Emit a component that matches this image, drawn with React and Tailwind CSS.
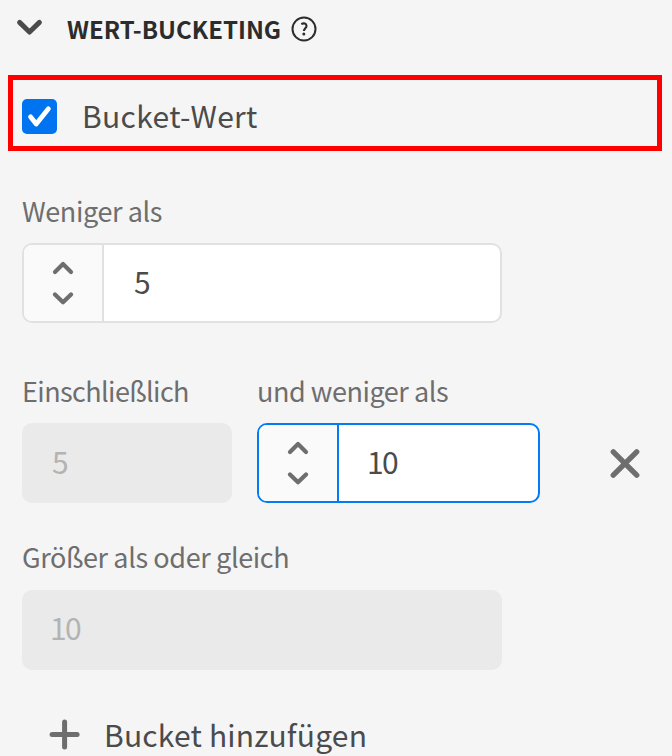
const FONT = "font-['Noto_Sans_CJK_SC','Noto_Sans',sans-serif]";

function Stepper() {
  return (
    <svg className="-mt-0.5" width="24" height="46" viewBox="0 0 24 46" fill="none" stroke="#6e6e6e" strokeWidth="4.2" strokeLinecap="round" strokeLinejoin="round">
      <path d="M4 12.9 12 5 20 12.9" />
      <path d="M4 35.4 12 43.2 20 35.4" />
    </svg>
  );
}

function Label({ children, className = "" }) {
  return (
    <label className={`block h-[30px] whitespace-nowrap text-[27px] text-[#6e6e6e] ${className}`}>
      {children}
    </label>
  );
}

function NumberField({ value, className, valueClassName }) {
  return (
    <div className={`flex h-20 overflow-hidden rounded-[10px] border-2 bg-white ${className}`}>
      <div className="flex w-[80px] items-center justify-center border-r-2 border-inherit bg-[#fafafa]">
        <Stepper />
      </div>
      <span className={`text-[30px] leading-[72px] tracking-[-1.6px] text-[#4b4b4b] ${valueClassName}`}>{value}</span>
    </div>
  );
}

function DisabledField({ value, className }) {
  return (
    <div className={`h-20 rounded-[10px] bg-[#eaeaea] text-[30px] tracking-[-1.6px] text-[#b3b3b3] ${className}`}>
      {value}
    </div>
  );
}

export default function App() {
  return (
    <main className={`flex h-[756px] w-[672px] flex-col overflow-hidden bg-[#f5f5f5] ${FONT}`}>
      <header className="flex h-[75px] items-start pl-4">
        <svg className="mt-[14px]" width="28" height="28" viewBox="0 0 28 28" fill="none" stroke="#4b4b4b" strokeWidth="5" strokeLinecap="round" strokeLinejoin="round">
          <path d="M3.6 8.4 13.5 18 23.4 8.4" />
        </svg>
        <h1 className="ml-[23px] mt-[11px] w-[216px] whitespace-nowrap text-[24px] font-bold leading-[36px] text-[#2c2c2c]">
          WERT-BUCKETING
        </h1>
        <svg className="ml-[7px] mt-[15px]" width="28" height="28" viewBox="0 0 28 28" fill="none">
          <circle cx="14" cy="14" r="11.5" stroke="#2c2c2c" strokeWidth="2" />
          <path d="M11.3 9.1c2.6-1.4 5.2-.5 5.2 1.8 0 2.2-2.6 2.5-2.6 5.2" stroke="#2c2c2c" strokeWidth="2.1" />
          <circle cx="13.8" cy="19.1" r="1.5" fill="#2c2c2c" />
        </svg>
      </header>

      <div className="ml-2 flex h-[76px] w-[654px] items-center border-[5px] border-[#ff0000] pl-[9px]">
        <div className="mt-[7px] flex size-[35px] items-center justify-center rounded-[5px] bg-[#0074f0]">
          <svg width="35" height="35" viewBox="0 0 35 35" fill="none" stroke="#fff" strokeWidth="4.8" strokeLinecap="round" strokeLinejoin="round">
            <path d="M8.5 17.8 14.2 25 26.4 9.8" />
          </svg>
        </div>
        <span className="ml-[25px] mt-[4px] whitespace-nowrap text-[30px] leading-[40px] tracking-[0.35px] text-[#4b4b4b]">Bucket-Wert</span>
      </div>

      <section className="mt-[44px] pl-[22px]">
        <Label className="leading-[32px] tracking-[-0.4px]">Weniger als</Label>
        <NumberField value="5" className="mt-[18px] w-[480px] border-[#e1e1e1]" valueClassName="pl-[30px]" />
      </section>

      <section className="mt-[52px] flex pl-[22px]">
        <div className="w-[210px]">
          <Label className="leading-[32px] tracking-[-0.6px]">Einschließlich</Label>
          <DisabledField value="5" className="mt-[18px] pl-[30px] leading-[76px]" />
        </div>
        <div className="ml-[25px] w-[283px]">
          <Label className="leading-[32px] tracking-[-0.45px]">und weniger als</Label>
          <NumberField value="10" className="mt-[18px] border-[#007df5]" valueClassName="pl-[28px]" />
        </div>
        <svg className="ml-[69px] mt-[72px]" width="32" height="32" viewBox="0 0 32 32" fill="none" stroke="#6e6e6e" strokeWidth="5.4" strokeLinecap="round">
          <path d="M4.3 4.8 27.7 28.2M27.7 4.8 4.3 28.2" />
        </svg>
      </section>

      <section className="mt-[39px] pl-[22px]">
        <Label className="leading-[30px] tracking-[-0.38px]">Größer als oder gleich</Label>
        <DisabledField value="10" className="mt-[18px] w-[480px] pl-[28px] leading-[74px]" />
      </section>

      <div className="mt-[44px] flex pl-[49px]">
        <svg className="mt-[5px] shrink-0" width="32" height="32" viewBox="0 0 32 32" fill="none" stroke="#6e6e6e" strokeWidth="5" strokeLinecap="round">
          <path d="M15.6 3v25M3.1 15.5h25" />
        </svg>
        <span className="ml-[23px] whitespace-nowrap text-[30px] leading-[40px] tracking-[0.2px] text-[#4b4b4b]">Bucket hinzufügen</span>
      </div>
    </main>
  );
}
